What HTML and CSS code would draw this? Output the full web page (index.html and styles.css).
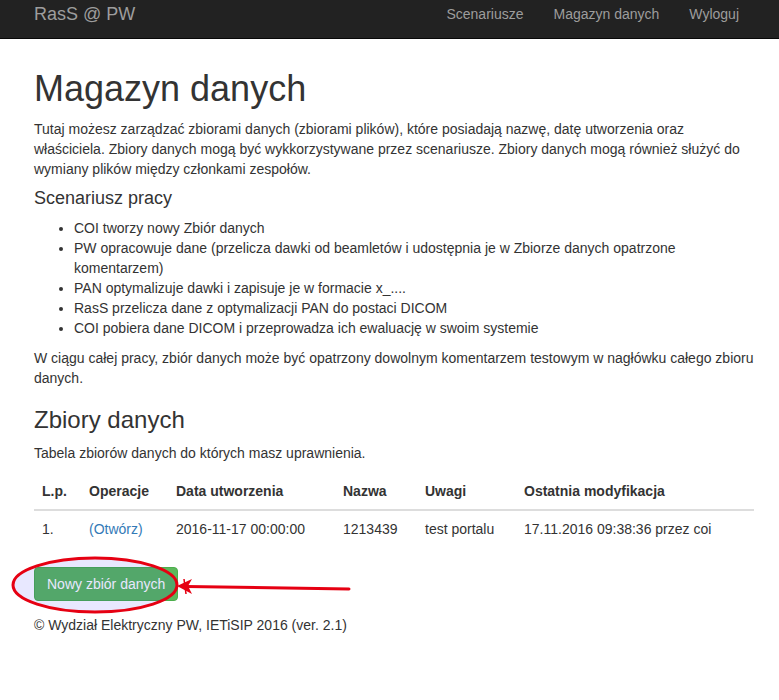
FILE: index.html
```html
<!DOCTYPE html>
<html lang="pl">
<head>
<meta charset="utf-8">
<title>Magazyn danych</title>
<link rel="stylesheet" href="styles.css">
</head>
<body>
<nav class="navbar">
  <div class="container nav-inner">
    <a class="brand" href="#">RasS @ PW</a>
    <ul class="nav-links">
      <li><a href="#">Scenariusze</a></li>
      <li><a href="#">Magazyn danych</a></li>
      <li><a href="#">Wyloguj</a></li>
    </ul>
  </div>
</nav>
<main class="container">
  <h1>Magazyn danych</h1>
  <p>Tutaj możesz zarządzać zbiorami danych (zbiorami plików), które posiadają nazwę, datę utworzenia oraz właściciela. Zbiory danych mogą być wykkorzystywane przez scenariusze. Zbiory danych mogą również służyć do wymiany plików między członkami zespołów.</p>
  <h4>Scenariusz pracy</h4>
  <ul class="steps">
    <li>COI tworzy nowy Zbiór danych</li>
    <li>PW opracowuje dane (przelicza dawki od beamletów i udostępnia je w Zbiorze danych opatrzone komentarzem)</li>
    <li>PAN optymalizuje dawki i zapisuje je w formacie x_....</li>
    <li>RasS przelicza dane z optymalizacji PAN do postaci DICOM</li>
    <li>COI pobiera dane DICOM i przeprowadza ich ewaluację w swoim systemie</li>
  </ul>
  <p>W ciągu całej pracy, zbiór danych może być opatrzony dowolnym komentarzem testowym w nagłówku całego zbioru danych.</p>
  <h2>Zbiory danych</h2>
  <p>Tabela zbiorów danych do których masz uprawnienia.</p>
  <table class="table">
    <thead>
      <tr>
        <th class="c1">L.p.</th>
        <th class="c2">Operacje</th>
        <th class="c3">Data utworzenia</th>
        <th class="c4">Nazwa</th>
        <th class="c5">Uwagi</th>
        <th class="c6">Ostatnia modyfikacja</th>
      </tr>
    </thead>
    <tbody>
      <tr>
        <td>1.</td>
        <td><a href="#">(Otwórz)</a></td>
        <td>2016-11-17 00:00:00</td>
        <td>1213439</td>
        <td>test portalu</td>
        <td>17.11.2016 09:38:36 przez coi</td>
      </tr>
    </tbody>
  </table>
  <div class="actions">
    <a class="btn-success" href="#">Nowy zbiór danych</a>
  </div>
  <footer class="footer">© Wydział Elektryczny PW, IETiSIP 2016 (ver. 2.1)</footer>
</main>
<svg class="annotation" width="779" height="700" viewBox="0 0 779 700" aria-hidden="true">
  <ellipse cx="95" cy="585" rx="82" ry="27" fill="rgba(0,0,255,0.09)" stroke="#e60012" stroke-width="3"/>
  <line x1="349" y1="589" x2="186" y2="586.5" stroke="#e60012" stroke-width="3" stroke-linecap="round"/>
  <polygon points="177,586 192,579 188,586 192,594" fill="#e60012"/>
  <line x1="184" y1="579" x2="186" y2="594" stroke="#e60012" stroke-width="1.5"/>
</svg>
</body>
</html>
```

FILE: styles.css
```css
* { box-sizing: border-box; }

html, body {
  margin: 0;
  padding: 0;
}

body {
  font-family: "Liberation Sans", Arial, Helvetica, sans-serif;
  font-size: 14px;
  line-height: 20px;
  color: #333;
  background: #fff;
  position: relative;
}

a { color: #337ab7; text-decoration: none; }

.container {
  width: 750px;
  margin-left: 19px;
  padding: 0 15px;
}

.navbar {
  background: #222;
  border-bottom: 1px solid #080808;
  height: 39px;
}

.nav-inner {
  display: flex;
  justify-content: space-between;
  align-items: flex-start;
}

.brand {
  color: #9d9d9d;
  font-size: 18px;
  line-height: 20px;
  padding-top: 4px;
}

.nav-links {
  display: flex;
  list-style: none;
  margin: 0;
  padding: 0;
}

.nav-links a {
  display: block;
  color: #9d9d9d;
  padding: 4px 15px 0;
  line-height: 20px;
}

h1, h2, h4 {
  font-family: inherit;
  font-weight: 500;
  line-height: 1.1;
  color: #333;
}

h1 {
  font-size: 36px;
  margin: 30px 0 10px;
}

h2 {
  font-size: 24px;
  margin: 19px 0 9px;
}

h4 {
  font-size: 18px;
  margin: 9px 0 10px;
}

p { margin: 0 0 10px; }

.steps {
  margin: 0 0 10px;
  padding-left: 40px;
}

.table {
  width: 100%;
  border-collapse: collapse;
  border-spacing: 0;
  margin: 1px 0 20px;
}

.table th, .table td {
  padding: 8px;
  text-align: left;
  vertical-align: bottom;
  line-height: 20px;
}

.table th {
  font-weight: bold;
  border-bottom: 2px solid #ddd;
}

.table td {
  vertical-align: top;
  border-top: 1px solid #ddd;
}

.c1 { width: 47px; }
.c2 { width: 87px; }
.c3 { width: 167px; }
.c4 { width: 82px; }
.c5 { width: 99px; }

.actions { display: flex; }

.btn-success {
  display: inline-block;
  padding: 6px 12px;
  font-size: 14px;
  line-height: 20px;
  color: #fff;
  background: #5cb85c;
  border: 1px solid #4cae4c;
  border-radius: 4px;
}

.footer {
  margin-top: 14px;
}

.annotation {
  position: absolute;
  top: 0;
  left: 0;
  pointer-events: none;
}
```
